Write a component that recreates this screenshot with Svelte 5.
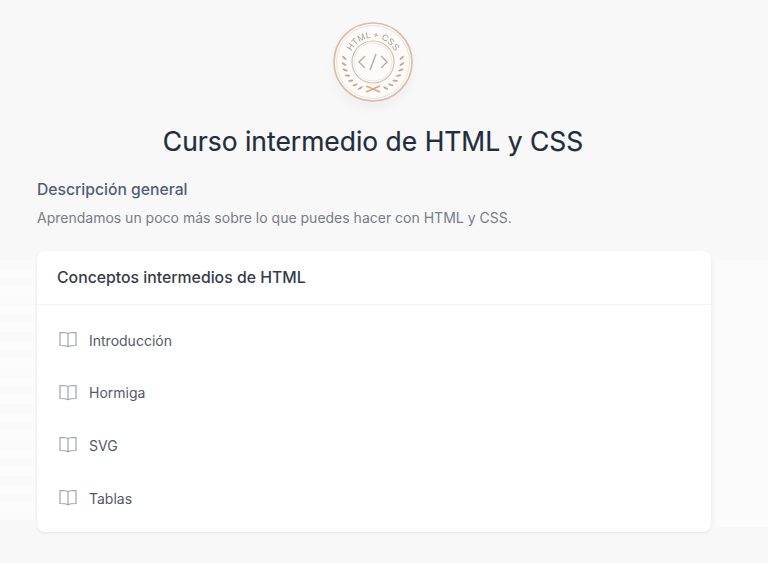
<script>
  const lessons = ['Introducción', 'Hormiga', 'SVG', 'Tablas'];
  const leaves = [0, 1, 2, 3, 4, 5, 6];
</script>

<main class="page">
  <div class="head">
    <div class="badge">
      <svg viewBox="0 0 100 100" width="100" height="100" aria-hidden="true">
        <defs>
          <path id="arc" d="M26 50a24 24 0 0 1 48 0" />
          <g id="sprig" fill="#c9a78c" stroke="none">
            {#each leaves as i}
              <ellipse cx="0" cy="-29" rx="1" ry="2.8" transform="rotate({82 + i * 12}) rotate(-35 0 -29)" />
            {/each}
          </g>
        </defs>
        <circle cx="50" cy="50" r="39" fill="#fdfbf9" stroke="#d9bda6" stroke-width="1.7" />
        <circle cx="50" cy="50" r="36.500" fill="none" stroke="#eadbcf" stroke-width=".8" />
        <circle cx="50" cy="50" r="21" fill="none" stroke="#d2c1b3" stroke-width="1.2" />
        <circle cx="50" cy="50" r="19" fill="none" stroke="#e8ddd4" stroke-width=".7" />
        <text class="arc-text"><textPath href="#arc" startOffset="50%" text-anchor="middle">HTML + CSS</textPath></text>
        <use href="#sprig" x="50" y="50" />
        <use href="#sprig" transform="translate(50 50) scale(-1 1)" />
        <path d="M42 44l-6 6 6 6M58 44l6 6-6 6M53 42l-6 16" fill="none" stroke="#b9aca0" stroke-width="1.4" />
        <path d="M43 74l7 3 7-3M43 80l7-3 7 3" fill="none" stroke="#e0a67f" stroke-width="1.6" />
      </svg>
    </div>
    <h1>Curso intermedio de HTML y CSS</h1>
  </div>

  <section class="overview">
    <h2>Descripción general</h2>
    <p>Aprendamos un poco más sobre lo que puedes hacer con HTML y CSS.</p>
  </section>

  <div class="band">
    <div class="card">
      <h3>Conceptos intermedios de HTML</h3>
      <ul>
        {#each lessons as lesson}
          <li>
            <svg viewBox="0 0 20 18" width="20" height="18" fill="none" stroke="#a0a4aa" stroke-width="1.2" aria-hidden="true">
              <path d="M10 2.500C8.500 1.800 6.500 1.500 2 1.500v13c4.500 0 6.500.3 8 1.200 1.500-.9 3.500-1.200 8-1.200v-13c-4.500 0-6.500.3-8 1zv13.200" />
            </svg>
            <span>{lesson}</span>
          </li>
        {/each}
      </ul>
    </div>
  </div>
</main>

<style>
  :global(body) {
    margin: 0;
    background: #f8f8f8;
  }

  .page {
    height: 563px;
    overflow: hidden;
    font-family: Inter, "Liberation Sans", sans-serif;
  }

  .head {
    width: 674px;
    margin-left: 37px;
    display: flex;
    flex-direction: column;
    align-items: center;
  }

  .badge {
    height: 112px;
    padding-top: 12px;
    box-sizing: border-box;
    margin-left: -2px;
  }

  .badge svg {
    display: block;
    filter: blur(.45px) drop-shadow(0 7px 5px rgba(0, 0, 0, .035));
  }

  .arc-text {
    font-family: "Liberation Sans", sans-serif;
    font-size: 9px;
    fill: #a89a8d;
  }

  h1 {
    margin: 12px 0 0 -2px;
    font-size: 26.45px;
    line-height: 34px;
    font-weight: 400;
    color: #1f2d3d;
    -webkit-text-stroke: .2px #1f2d3d;
  }

  .overview {
    margin: 22px 0 0 37px;
  }

  h2 {
    margin: 0;
    font-size: 15.7px;
    line-height: 20px;
    font-weight: 500;
    color: #505e75;
  }

  p {
    margin: 9px 0 0;
    font-size: 14px;
    line-height: 18px;
    color: #747d89;
  }

  .band {
    margin-top: 24px;
    padding-left: 37px;
    background:
      repeating-linear-gradient(#fafafa 0 9px, #fcfcfc 9px 18px) 0 9px / 35px 260px no-repeat,
      linear-gradient(#fbfbfb, #fbfbfb) 716px 9px / 52px 267px no-repeat;
  }

  .card {
    width: 674px;
    height: 281px;
    box-sizing: border-box;
    background: #fff;
    border-radius: 8px;
    box-shadow: 0 1px 3px rgba(0, 0, 0, .08);
  }

  h3 {
    margin: 0;
    height: 54px;
    box-sizing: border-box;
    padding: 0 20px;
    display: flex;
    align-items: center;
    font-size: 15.8px;
    font-weight: 450;
    color: #343c48;
    border-bottom: 1px solid #f3f4f6;
  }

  ul {
    list-style: none;
    margin: 0;
    padding: 9px 0 0 21px;
  }

  li {
    height: 52.6px;
    display: flex;
    align-items: center;
    gap: 11px;
    font-size: 14px;
    color: #525a67;
  }
</style>
